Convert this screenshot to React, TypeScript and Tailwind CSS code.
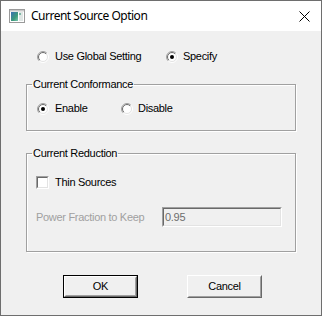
import React from "react";

function Radio({ checked }: { checked?: boolean }) {
  return (
    <svg width="12" height="12" viewBox="0 0 12 12" className="shrink-0">
      <defs>
        <linearGradient id="rgo" x1="0" y1="0" x2="1" y2="1">
          <stop offset="0.45" stopColor="#a0a0a0" />
          <stop offset="0.55" stopColor="#ffffff" />
        </linearGradient>
        <linearGradient id="rgi" x1="0" y1="0" x2="1" y2="1">
          <stop offset="0.45" stopColor="#696969" />
          <stop offset="0.55" stopColor="#e3e3e3" />
        </linearGradient>
      </defs>
      <circle cx="6" cy="6" r="5.5" fill="none" stroke="url(#rgo)" strokeWidth="1" />
      <circle cx="6" cy="6" r="4.5" fill="#ffffff" stroke="url(#rgi)" strokeWidth="1" />
      {checked && <circle cx="6" cy="6" r="2" fill="#000000" />}
    </svg>
  );
}

function Checkbox() {
  return (
    <div className="w-[13px] h-[13px] shrink-0 border border-t-[#a0a0a0] border-l-[#a0a0a0] border-b-white border-r-white">
      <div className="w-full h-full bg-white border border-t-[#696969] border-l-[#696969] border-b-[#e3e3e3] border-r-[#e3e3e3]" />
    </div>
  );
}

function Btn({ label, def }: { label: string; def?: boolean }) {
  const inner = (
    <div className="w-full h-full border border-t-white border-l-white border-b-[#696969] border-r-[#696969]">
      <div className="w-full h-full flex items-center justify-center border border-t-[#f0f0f0] border-l-[#f0f0f0] border-b-[#a0a0a0] border-r-[#a0a0a0] bg-[#f0f0f0]">
        {label}
      </div>
    </div>
  );
  return (
    <div className={"w-[75px] h-[23px] " + (def ? "border border-black" : "")}>
      {inner}
    </div>
  );
}

export default function App() {
  return (
    <div
      className="w-[322px] h-[316px] flex flex-col border border-[#6e6e6e] bg-[#f0f0f0] text-black"
      style={{ fontFamily: '"Liberation Sans", Arial, sans-serif' }}
    >
      {/* Title bar */}
      <div className="h-[30px] bg-white flex items-center shrink-0">
        <svg width="16" height="14" viewBox="0 0 16 14" className="ml-[8px]">
          <defs>
            <linearGradient id="ic" x1="0" y1="0" x2="1" y2="1">
              <stop offset="0" stopColor="#3a6fb5" />
              <stop offset="0.6" stopColor="#3c9a7a" />
              <stop offset="1" stopColor="#7cc6b0" />
            </linearGradient>
          </defs>
          <rect x="0.5" y="0.5" width="15" height="13" fill="#ffffff" stroke="#9a9a9a" />
          <rect x="1" y="1" width="14" height="1.5" fill="#c8c8c8" />
          <rect x="2" y="3" width="7" height="9" fill="url(#ic)" />
          <rect x="10" y="3" width="4" height="9" fill="#dfe6e4" />
          <rect x="10" y="4" width="2" height="2" fill="#7fb8a6" />
        </svg>
        <span
          className="ml-[6px] text-[12px] leading-none tracking-[-0.5px]"
          style={{ fontFamily: '"Noto Sans", "Open Sans", sans-serif' }}
        >
          Current Source Option
        </span>
        <svg width="11" height="11" viewBox="0 0 11 11" className="ml-auto mr-[11px]">
          <path d="M0.5 0.5 L10.5 10.5 M10.5 0.5 L0.5 10.5" stroke="#000" strokeWidth="1" />
        </svg>
      </div>

      {/* Content */}
      <div className="flex-1 px-[25px] text-[11px] leading-[13px] tracking-[-0.3px]">
        <div className="mt-[19px] flex items-center h-[13px]">
          <div className="w-[129px] ml-[11px] flex items-center gap-[6px]">
            <Radio />
            <span>Use Global Setting</span>
          </div>
          <div className="flex items-center gap-[5px]">
            <Radio checked />
            <span>Specify</span>
          </div>
        </div>

        <fieldset className="mt-[15px] h-[53px] border border-[#a0a0a0] shadow-[inset_1px_1px_0_#ffffff,1px_1px_0_#ffffff]">
          <legend className="ml-[5px] px-[1px] leading-[13px]">Current Conformance</legend>
          <div className="mt-[11px] ml-[10px] flex items-center h-[13px]">
            <div className="w-[84px] flex items-center gap-[6px]">
              <Radio checked />
              <span>Enable</span>
            </div>
            <div className="flex items-center gap-[5px]">
              <Radio />
              <span>Disable</span>
            </div>
          </div>
        </fieldset>

        <fieldset className="mt-[16px] h-[105px] border border-[#a0a0a0] shadow-[inset_1px_1px_0_#ffffff,1px_1px_0_#ffffff]">
          <legend className="ml-[5px] px-[1px] leading-[13px]">Current Reduction</legend>
          <div className="mt-[16px] ml-[9px] flex items-center gap-[6px] h-[13px]">
            <Checkbox />
            <span>Thin Sources</span>
          </div>
          <div className="mt-[18px] ml-[9px] flex items-center h-[20px]">
            <span className="w-[126px] text-[#a0a0a0]">Power Fraction to Keep</span>
            <div className="w-[120px] h-[20px] border border-t-[#a0a0a0] border-l-[#a0a0a0] border-b-white border-r-white">
              <div className="w-full h-full border border-t-[#696969] border-l-[#696969] border-b-[#e3e3e3] border-r-[#e3e3e3] bg-[#f0f0f0] flex items-center pl-[1px] text-[#6d6d6d]">
                0.95
              </div>
            </div>
          </div>
        </fieldset>

        <div className="mt-[23px] flex pl-[37px] gap-[49px]">
          <Btn label="OK" def />
          <Btn label="Cancel" />
        </div>
      </div>
    </div>
  );
}
